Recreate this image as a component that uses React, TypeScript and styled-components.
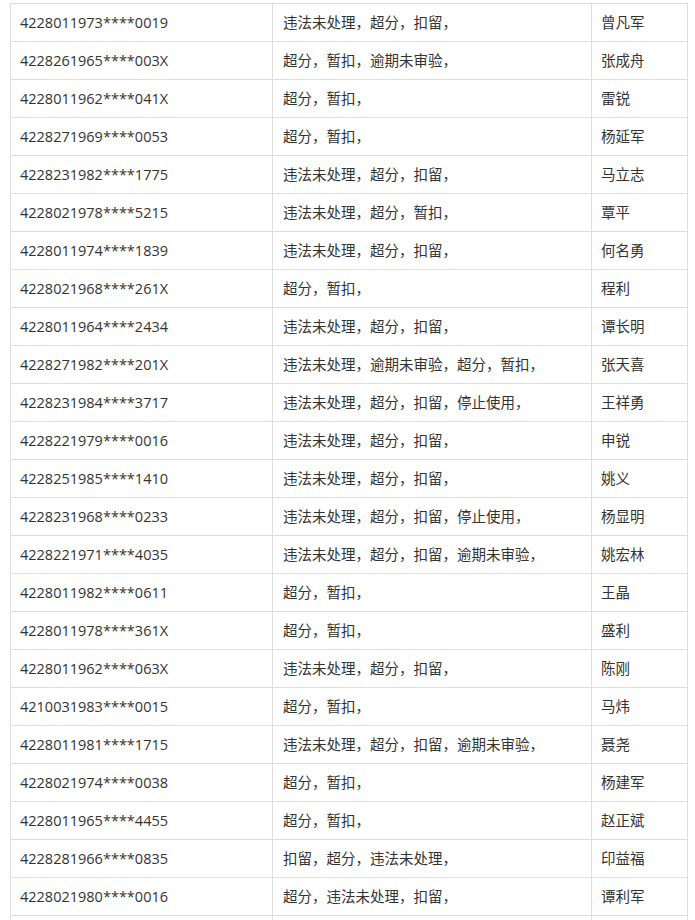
import React from "react";
import styled, { createGlobalStyle } from "styled-components";

const Global = createGlobalStyle`
  html, body { margin: 0; padding: 0; background: #fff; }
  body { font-family: "Open Sans", "Noto Sans CJK SC", sans-serif; }
`;

const Wrap = styled.div`
  padding: 3px 9px 0 10px;
`;

const Table = styled.table`
  border-collapse: collapse;
  width: 677px;
  table-layout: fixed;
  color: #333;
  font-size: 14.5px;
`;

const Cell = styled.td<{ $w: number; $pl: number }>`
  width: ${(p) => p.$w}px;
  height: 38px;
  box-sizing: border-box;
  padding: 0 0 0 ${(p) => p.$pl}px;
  border: 1px solid #ddd;
  white-space: nowrap;
  line-height: 20px;
  vertical-align: middle;
`;

const rows: [string, string, string][] = [
  ["4228011973****0019", "违法未处理，超分，扣留，", "曾凡军"],
  ["4228261965****003X", "超分，暂扣，逾期未审验，", "张成舟"],
  ["4228011962****041X", "超分，暂扣，", "雷锐"],
  ["4228271969****0053", "超分，暂扣，", "杨延军"],
  ["4228231982****1775", "违法未处理，超分，扣留，", "马立志"],
  ["4228021978****5215", "违法未处理，超分，暂扣，", "覃平"],
  ["4228011974****1839", "违法未处理，超分，扣留，", "何名勇"],
  ["4228021968****261X", "超分，暂扣，", "程利"],
  ["4228011964****2434", "违法未处理，超分，扣留，", "谭长明"],
  ["4228271982****201X", "违法未处理，逾期未审验，超分，暂扣，", "张天喜"],
  ["4228231984****3717", "违法未处理，超分，扣留，停止使用，", "王祥勇"],
  ["4228221979****0016", "违法未处理，超分，扣留，", "申锐"],
  ["4228251985****1410", "违法未处理，超分，扣留，", "姚义"],
  ["4228231968****0233", "违法未处理，超分，扣留，停止使用，", "杨显明"],
  ["4228221971****4035", "违法未处理，超分，扣留，逾期未审验，", "姚宏林"],
  ["4228011982****0611", "超分，暂扣，", "王晶"],
  ["4228011978****361X", "超分，暂扣，", "盛利"],
  ["4228011962****063X", "违法未处理，超分，扣留，", "陈刚"],
  ["4210031983****0015", "超分，暂扣，", "马炜"],
  ["4228011981****1715", "违法未处理，超分，扣留，逾期未审验，", "聂尧"],
  ["4228021974****0038", "超分，暂扣，", "杨建军"],
  ["4228011965****4455", "超分，暂扣，", "赵正斌"],
  ["4228281966****0835", "扣留，超分，违法未处理，", "印益福"],
  ["4228021980****0016", "超分，违法未处理，扣留，", "谭利军"],
  ["", "", ""],
];

export default function App() {
  return (
    <Wrap>
      <Global />
      <Table>
        <tbody>
          {rows.map((r, i) => (
            <tr key={i}>
              <Cell $w={262} $pl={9}>{r[0]}</Cell>
              <Cell $w={319} $pl={10}>{r[1]}</Cell>
              <Cell $w={96} $pl={9}>{r[2]}</Cell>
            </tr>
          ))}
        </tbody>
      </Table>
    </Wrap>
  );
}
